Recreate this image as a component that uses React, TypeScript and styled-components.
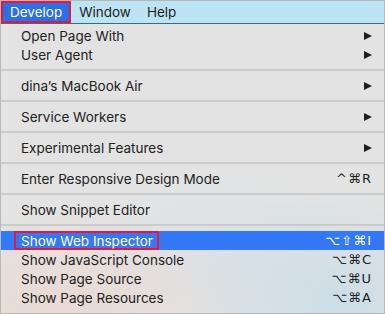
import styled, { createGlobalStyle } from "styled-components"

const GlobalStyle = createGlobalStyle`
  html, body {
    margin: 0;
    padding: 0;
    background: #ffffff;
  }
  body {
    font-family: "Inter", "DejaVu Sans", sans-serif;
  }
`

type Item = {
  label: string
  shortcut?: string
  submenu?: boolean
  selected?: boolean
}

// groups of menu entries, separated by a line
const groups: Item[][] = [
  [{ label: "Open Page With", submenu: true }, { label: "User Agent", submenu: true }],
  [{ label: "dina’s MacBook Air", submenu: true }],
  [{ label: "Service Workers", submenu: true }],
  [{ label: "Experimental Features", submenu: true }],
  [{ label: "Enter Responsive Design Mode", shortcut: "^⌘R" }],
  [{ label: "Show Snippet Editor" }],
  [
    { label: "Show Web Inspector", shortcut: "⌥⇧⌘I", selected: true },
    { label: "Show JavaScript Console", shortcut: "⌥⌘C" },
    { label: "Show Page Source", shortcut: "⌥⌘U" },
    { label: "Show Page Resources", shortcut: "⌥⌘A" },
  ],
]

const App = () => (
  <>
    <GlobalStyle />
    <Frame>
      <MenuBar>
        <MenuTitle $active>Develop</MenuTitle>
        <MenuTitle>Window</MenuTitle>
        <MenuTitle>Help</MenuTitle>
      </MenuBar>
      <Dropdown>
        {groups.map((group, gi) => (
          <Group key={gi}>
            {gi > 0 && <Separator />}
            {group.map((item) => (
              <Row key={item.label} $selected={item.selected}>
                {item.selected ? <Marked>{item.label}</Marked> : <Label>{item.label}</Label>}
                {item.shortcut && <Shortcut>{item.shortcut}</Shortcut>}
                {item.submenu && <Arrow />}
              </Row>
            ))}
          </Group>
        ))}
      </Dropdown>
    </Frame>
  </>
)

// Styled components
const Frame = styled.div`
  width: 385px;
  height: 314px;
  box-sizing: border-box;
  border: 1px solid #b9b9b9;
  display: flex;
  flex-direction: column;
  overflow: hidden;
  background:
    radial-gradient(ellipse 180px 90px at 60px 300px, rgba(236, 214, 206, 0.7), transparent),
    radial-gradient(ellipse 160px 110px at 340px 300px, rgba(200, 220, 232, 0.8), transparent),
    radial-gradient(ellipse 140px 80px at 230px 250px, rgba(214, 224, 232, 0.6), transparent),
    #e3e3e3;
`

const MenuBar = styled.div`
  height: 22px;
  flex-shrink: 0;
  display: flex;
  align-items: stretch;
  background: #bde4f5;
  border-bottom: 1px solid #3f6a7e;
  font-size: 13.5px;
  color: #1d1d1d;
`

const MenuTitle = styled.div<{ $active?: boolean }>`
  display: flex;
  align-items: center;
  box-sizing: border-box;
  padding: ${(p) => (p.$active ? "0 7px" : "0 8px")};
  background: ${(p) => (p.$active ? "#2b6fe9" : "transparent")};
  color: ${(p) => (p.$active ? "#ffffff" : "#1d1d1d")};
  border: ${(p) => (p.$active ? "2px solid #e5193d" : "none")};
`

const Dropdown = styled.div`
  flex: 1;
  display: flex;
  flex-direction: column;
  padding-top: 2px;
  font-size: 13.5px;
  color: #222222;
`

const Group = styled.div`
  display: flex;
  flex-direction: column;
`

const Separator = styled.div`
  height: 2px;
  margin: 5px 0;
  background: #cbcbcb;
`

const Row = styled.div<{ $selected?: boolean }>`
  height: 19px;
  display: flex;
  align-items: center;
  padding: 0 12px 0 20px;
  background: ${(p) => (p.$selected ? "#3478f6" : "transparent")};
  color: ${(p) => (p.$selected ? "#ffffff" : "#222222")};
`

const Label = styled.span`
  flex: 1;
  white-space: nowrap;
`

const Marked = styled.span`
  margin-left: -7px;
  margin-right: auto;
  height: 19px;
  box-sizing: border-box;
  display: flex;
  align-items: center;
  padding: 0 4px 0 5px;
  border: 2px solid #e5193d;
  white-space: nowrap;
`

const Shortcut = styled.span`
  font-family: "DejaVu Sans", sans-serif;
  font-size: 13px;
  letter-spacing: 1px;
`

const Arrow = styled.span`
  width: 0;
  height: 0;
  border-top: 4.5px solid transparent;
  border-bottom: 4.5px solid transparent;
  border-left: 8px solid #1f1f1f;
`

export default App
